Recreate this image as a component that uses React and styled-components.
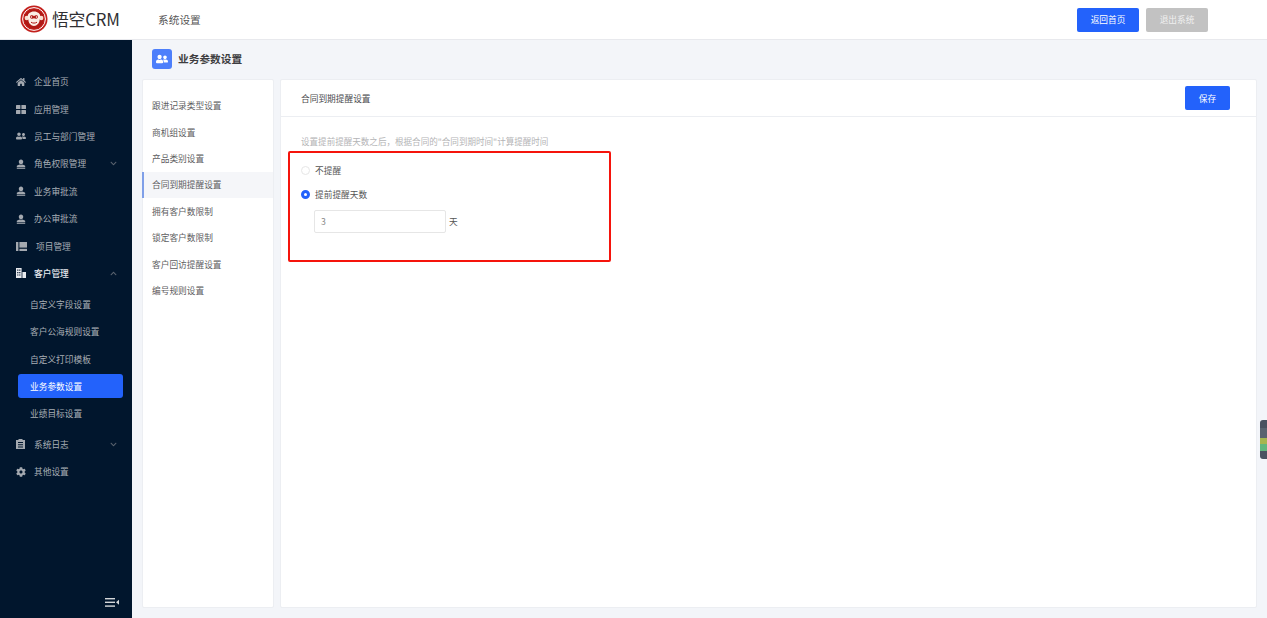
import React from "react";
import styled, { createGlobalStyle } from "styled-components";
import { FaHome, FaUserFriends, FaCog, FaChevronDown, FaChevronUp } from "react-icons/fa";

const Global = createGlobalStyle`
  html, body { margin: 0; padding: 0; height: 100%; }
  body { font-family: "Noto Sans CJK SC", "Noto Sans", sans-serif; background: #f3f5f9; overflow: hidden; }
  * { box-sizing: border-box; }
`;

const Page = styled.div`
  position: relative;
  width: 1267px;
  height: 618px;
  display: flex;
  flex-direction: column;
  overflow: hidden;
`;
const TopBar = styled.header`
  height: 40px;
  flex: none;
  display: flex;
  align-items: center;
  background: #fff;
  border-bottom: 1px solid #e8e9ed;
  padding: 0 59px 0 20px;
`;
const Logo = styled.div`
  display: flex;
  align-items: center;
  gap: 4px;
  width: 138px;
  margin-top: -1px;
`;
const LogoText = styled.span`
  font-size: 16.8px;
  color: #2f2f33;
  line-height: 1;
  white-space: nowrap;
  letter-spacing: -0.2px;
`;
const TopTitle = styled.span`
  font-size: 10.7px;
  color: #555;
  flex: 1;
  margin-top: -1px;
`;
const TopButton = styled.button`
  width: ${p => p.$w || 62}px;
  height: 24px;
  margin-left: ${p => p.$ml || 0}px;
  border: 0;
  border-radius: 2px;
  font: inherit;
  font-size: 8.7px;
  color: ${p => (p.$muted ? "#f0f0f0" : "#fff")};
  background: ${p => (p.$muted ? "#c2c2c2" : "#2362fb")};
  padding: 0;
`;
const Body = styled.div`
  flex: 1;
  display: flex;
  min-height: 0;
`;
const Side = styled.aside`
  position: relative;
  width: 132px;
  flex: none;
  background: #01162d;
  padding-top: 28px;
  display: flex;
  flex-direction: column;
`;
const NavRow = styled.div`
  height: 27.4px;
  display: flex;
  align-items: center;
  padding-left: 16px;
  color: ${p => (p.$on ? "#e8eaee" : "#a9afb6")};
  font-size: 8.7px;
  font-weight: ${p => (p.$on ? 500 : 400)};
  flex: none;
`;
const NavIcon = styled.span`
  width: 18px;
  flex: none;
  display: flex;
  align-items: center;
  color: ${p => (p.$on ? "#e8eaee" : "#a4a9b0")};
  font-size: 10px;
`;
const NavText = styled.span`
  flex: 1;
  margin-left: ${p => p.$ml || 0}px;
`;
const Chev = styled.span`
  width: 8px;
  margin-right: 14px;
  display: flex;
  color: #59626e;
  font-size: 7px;
`;
const SubList = styled.div`
  display: flex;
  flex-direction: column;
  padding: 3.5px 0 3px;
  flex: none;
`;
const SubRow = styled.div`
  height: 24px;
  margin: 1.7px 9px 1.7px 18px;
  padding-left: 12px;
  display: flex;
  align-items: center;
  border-radius: 3px;
  font-size: 8.7px;
  color: ${p => (p.$on ? "#fff" : "#a9afb6")};
  background: ${p => (p.$on ? "#2362fb" : "transparent")};
`;
const Collapse = styled.svg`
  position: absolute;
  right: 13px;
  bottom: 11px;
`;
const Main = styled.main`
  flex: 1;
  min-width: 0;
  padding: 0 10px 10px 10px;
  display: flex;
  flex-direction: column;
`;
const PageHead = styled.div`
  height: 39px;
  flex: none;
  display: flex;
  align-items: center;
  gap: 6px;
  padding: 0 0 2px 10px;
`;
const HeadBadge = styled.span`
  width: 20px;
  height: 20px;
  border-radius: 3px;
  background: #4d7ffb;
  color: #fff;
  display: flex;
  align-items: center;
  justify-content: center;
  font-size: 12px;
`;
const HeadTitle = styled.span`
  font-size: 10.7px;
  font-weight: 700;
  color: #3d3d40;
`;
const Columns = styled.div`
  flex: 1;
  min-height: 0;
  display: flex;
  gap: 7px;
`;
const Panel = styled.section`
  background: #fff;
  border: 1px solid #eceef2;
  border-radius: 2px;
`;
const LeftPanel = styled(Panel)`
  width: 132px;
  flex: none;
  padding-top: 12.5px;
  margin-right: -1px;
`;
const MenuItem = styled.div`
  height: 26.4px;
  display: flex;
  align-items: center;
  padding-left: 8px;
  font-size: 8.7px;
  color: #5d5d60;
  margin-left: -1px;
  border-left: 2px solid ${p => (p.$on ? "#7f9fe8" : "transparent")};
  background: ${p => (p.$on ? "#f5f6f9" : "transparent")};
`;
const RightPanel = styled(Panel)`
  flex: 1;
  min-width: 0;
`;
const PanelHead = styled.div`
  height: 37px;
  display: flex;
  align-items: center;
  justify-content: space-between;
  padding: 0 26px 0 20px;
  border-bottom: 1px solid #eceef2;
`;
const PanelTitle = styled.span`
  font-size: 8.7px;
  color: #4a4a4d;
`;
const Form = styled.div`
  padding: 17px 0 0 20px;
`;
const Hint = styled.div`
  font-size: 8.55px;
  line-height: 14px;
  color: #b4b4b6;
  margin-bottom: 15px;
`;
const RadioRow = styled.div`
  display: flex;
  align-items: center;
  gap: 5px;
  height: 14px;
  margin-bottom: ${p => p.$mb}px;
  font-size: 8.7px;
  color: #555;
`;
const Radio = styled.span`
  width: 9px;
  height: 9px;
  border-radius: 50%;
  flex: none;
  background: #fff;
  border: ${p => (p.$on ? "3px solid #2362fb" : "1px solid #e6e6e6")};
`;
const DaysRow = styled.div`
  display: flex;
  align-items: center;
  gap: 3px;
  margin-left: 13px;
  font-size: 8.7px;
  color: #555;
`;
const DaysInput = styled.div`
  width: 132px;
  height: 23px;
  border: 1px solid #e6e6e6;
  border-radius: 2px;
  display: flex;
  align-items: center;
  padding-left: 6px;
  color: #8a8a8a;
`;
const Highlight = styled.div`
  position: absolute;
  left: 288px;
  top: 151px;
  width: 323px;
  height: 111px;
  border: 2px solid #f5140c;
  border-radius: 2px;
  pointer-events: none;
`;
const SideWidget = styled.div`
  position: absolute;
  right: 0;
  top: 420px;
  width: 7px;
  height: 39px;
  border-radius: 3px 0 0 3px;
  background: linear-gradient(#4a5260 0 8px, #59636f 8px 18px, #a5b64f 18px 24px, #60b67d 24px 31px, #4a5260 31px);
`;

const GridIcon = () => (
  <svg width="10" height="9" viewBox="0 0 10 9" fill="currentColor">
    <rect x="0" y="0" width="4.4" height="4" rx=".5" />
    <rect x="5.4" y="0" width="4.6" height="4" rx=".5" />
    <rect x="0" y="5" width="4.4" height="4" rx=".5" />
    <rect x="5.4" y="5" width="4.6" height="4" rx=".5" />
  </svg>
);
const ProjectIcon = () => (
  <svg width="11" height="9" viewBox="0 0 11 9" fill="currentColor">
    <rect x="0" y="0" width="2.4" height="9" />
    <rect x="3.4" y="0" width="7.6" height="5.6" />
    <rect x="3.4" y="6.8" width="7.6" height="2.2" />
  </svg>
);
const BadgeUser = () => (
  <svg width="10" height="10" viewBox="0 0 10 10" fill="currentColor">
    <path d="M5 0.5c1.4 0 2.2 1 2.2 2.3S6.4 5.4 5 5.4 2.8 4.1 2.8 2.8 3.6 0.5 5 0.5z" />
    <path d="M3.6 5.4 1.2 6.6C.9 6.8.8 7 .8 7.3V8h8.4v-.7c0-.3-.1-.5-.4-.7L6.4 5.4 5 6.2z" />
    <rect x=".8" y="8.6" width="8.4" height="1.2" />
  </svg>
);
const OfficeIcon = () => (
  <svg width="10" height="10" viewBox="0 0 10 10" fill="currentColor">
    <path fillRule="evenodd" d="M0 0h5.6v10H0zM1.2 1.6v1.2h1.2V1.6zm2 0v1.2h1.2V1.6zM1.2 4v1.2h1.2V4zm2 0v1.2h1.2V4zM1.2 6.4v1.2h1.2V6.4zm2 0v1.2h1.2V6.4z" />
    <rect x="6.4" y="4" width="3.6" height="6" />
  </svg>
);
const LogIcon = () => (
  <svg width="9" height="10" viewBox="0 0 9 10" fill="currentColor">
    <path fillRule="evenodd" d="M0 1h2.5V0h4v1H9v9H0zM2 3v1h5V3zm0 2.2v1h5v-1zm0 2.2v1h5v-1z" />
  </svg>
);
const Monkey = () => (
  <svg width="28" height="28" viewBox="0 0 28 28">
    <circle cx="14" cy="14" r="13.5" fill="#c3201c" />
    <circle cx="14" cy="14" r="11.4" fill="none" stroke="#fff" strokeWidth="1" />
    <circle cx="14" cy="14" r="9.8" fill="#b01915" />
    <circle cx="6.8" cy="13" r="2.2" fill="#f7ded0" />
    <circle cx="21.2" cy="13" r="2.2" fill="#f7ded0" />
    <path d="M14 6.5c4 0 6.3 2.4 6.3 5 0 1.6-.7 2.4-.7 3.6 0 2.8-2.6 6-5.6 6s-5.6-3.2-5.6-6c0-1.2-.7-2-.7-3.6 0-2.6 2.3-5 6.3-5z" fill="#fbeee6" />
    <path d="M14 11.2c-1-1.3-3.6-1.4-4 .3-.3 1.4 1 2.4 2 2.2.8-.1 1.4-.5 2-.5s1.2.4 2 .5c1 .2 2.3-.8 2-2.2-.4-1.7-3-1.6-4-.3z" fill="#b01915" />
    <circle cx="11.4" cy="12" r=".8" fill="#fff" />
    <circle cx="16.6" cy="12" r=".8" fill="#fff" />
    <path d="M11 17.2c1.8 1.2 4.2 1.2 6 0" fill="none" stroke="#b01915" strokeWidth="1" />
  </svg>
);

const before = [
  [<FaHome />, "企业首页"],
  [<GridIcon />, "应用管理"],
  [<FaUserFriends />, "员工与部门管理"],
  [<BadgeUser />, "角色权限管理", "down"],
  [<BadgeUser />, "业务审批流"],
  [<BadgeUser />, "办公审批流"],
  [<ProjectIcon />, "项目管理", null, 2],
];
const subs = ["自定义字段设置", "客户公海规则设置", "自定义打印模板", "业务参数设置", "业绩目标设置"];
const menu = ["跟进记录类型设置", "商机组设置", "产品类别设置", "合同到期提醒设置", "拥有客户数限制", "锁定客户数限制", "客户回访提醒设置", "编号规则设置"];

export default function App() {
  return (
    <Page>
      <Global />
      <TopBar>
        <Logo>
          <Monkey />
          <LogoText>悟空CRM</LogoText>
        </Logo>
        <TopTitle>系统设置</TopTitle>
        <TopButton>返回首页</TopButton>
        <TopButton $muted $ml={7}>退出系统</TopButton>
      </TopBar>
      <Body>
        <Side>
          {before.map(([icon, label, chev, ml]) => (
            <NavRow key={label}>
              <NavIcon>{icon}</NavIcon>
              <NavText $ml={ml}>{label}</NavText>
              {chev && <Chev><FaChevronDown /></Chev>}
            </NavRow>
          ))}
          <NavRow $on>
            <NavIcon $on><OfficeIcon /></NavIcon>
            <NavText>客户管理</NavText>
            <Chev><FaChevronUp /></Chev>
          </NavRow>
          <SubList>
            {subs.map(s => (
              <SubRow key={s} $on={s === "业务参数设置"}>{s}</SubRow>
            ))}
          </SubList>
          <NavRow>
            <NavIcon><LogIcon /></NavIcon>
            <NavText>系统日志</NavText>
            <Chev><FaChevronDown /></Chev>
          </NavRow>
          <NavRow>
            <NavIcon><FaCog /></NavIcon>
            <NavText>其他设置</NavText>
          </NavRow>
          <Collapse width="14" height="9" viewBox="0 0 14 9" fill="#d5d7da">
            <rect x="0" y="0" width="10" height="1.4" />
            <rect x="0" y="3.6" width="10" height="1.4" />
            <rect x="0" y="7.4" width="10" height="1.4" />
            <path d="M14 1.8v5l-3-2.5z" />
          </Collapse>
        </Side>
        <Main>
          <PageHead>
            <HeadBadge><FaUserFriends /></HeadBadge>
            <HeadTitle>业务参数设置</HeadTitle>
          </PageHead>
          <Columns>
            <LeftPanel>
              {menu.map(m => (
                <MenuItem key={m} $on={m === "合同到期提醒设置"}>{m}</MenuItem>
              ))}
            </LeftPanel>
            <RightPanel>
              <PanelHead>
                <PanelTitle>合同到期提醒设置</PanelTitle>
                <TopButton $w={45}>保存</TopButton>
              </PanelHead>
              <Form>
                <Hint>设置提前提醒天数之后，根据合同的"合同到期时间"计算提醒时间</Hint>
                <RadioRow $mb={10}><Radio />不提醒</RadioRow>
                <RadioRow $mb={9}><Radio $on />提前提醒天数</RadioRow>
                <DaysRow>
                  <DaysInput>3</DaysInput>
                  天
                </DaysRow>
              </Form>
            </RightPanel>
          </Columns>
        </Main>
      </Body>
      <Highlight />
      <SideWidget />
    </Page>
  );
}
